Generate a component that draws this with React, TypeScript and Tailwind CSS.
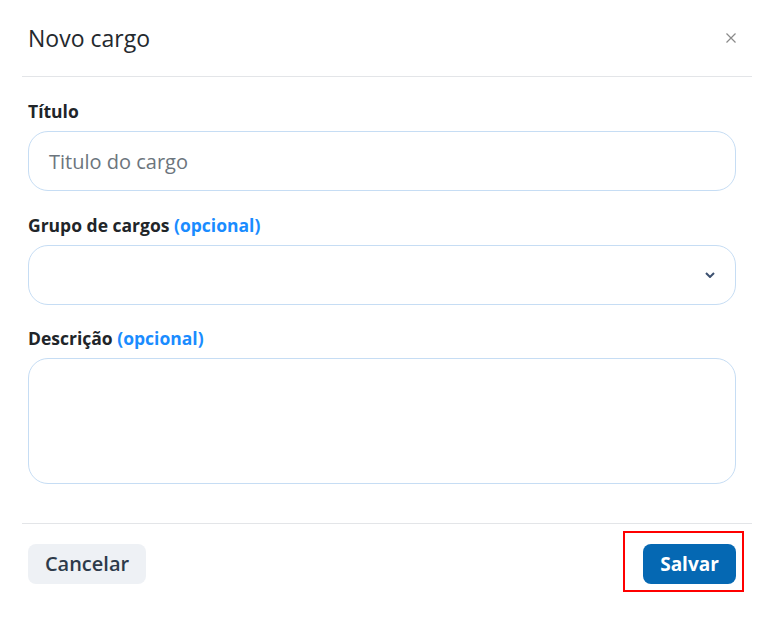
import React from "react";

export default function App() {
  return (
    <div className="w-[766px] h-[628px] bg-white font-['Open_Sans',sans-serif] text-[#212529]">
      <div className="ml-[22px] w-[730px]">
        <div className="h-[77px] border-b border-[#e3e5e8] flex items-center justify-between pl-[6px] pr-[16px]">
          <h2 className="text-[23px] leading-none font-normal text-[#24292e]">Novo cargo</h2>
          <button className="w-[10px] h-[10px] flex items-center justify-center -mt-[1px]">
            <svg width="10" height="10" viewBox="0 0 10 10">
              <path d="M0.5 0.5 L9.5 9.5 M9.5 0.5 L0.5 9.5" stroke="#8a8a8a" strokeWidth="1.2" />
            </svg>
          </button>
        </div>
        <div className="pl-[6px] pr-[16px] pt-[22px] pb-[39px] border-b border-[#e3e5e8]">
          <label className="block text-[17.5px] leading-[24px] font-bold text-[#212529]">Título</label>
          <div className="mt-[8px] h-[60px] rounded-[20px] border border-[#c6ddf4] flex items-center pl-[20px]">
            <span className="text-[20px] text-[#6c757d] mt-[1px]">Titulo do cargo</span>
          </div>
          <label className="block mt-[22px] text-[17.5px] leading-[24px] font-bold text-[#212529]">
            Grupo de cargos <span className="text-[#1a8cff]">(opcional)</span>
          </label>
          <div className="mt-[8px] h-[60px] rounded-[20px] border border-[#c6ddf4] flex items-center justify-end pr-[20px]">
            <svg width="10" height="6" viewBox="0 0 10 6">
              <path d="M1 1 L5 5 L9 1" stroke="#3d5170" strokeWidth="2" fill="none" />
            </svg>
          </div>
          <label className="block mt-[21px] text-[17.5px] leading-[24px] font-bold text-[#212529]">
            Descrição <span className="text-[#1a8cff]">(opcional)</span>
          </label>
          <div className="mt-[8px] h-[126px] rounded-[20px] border border-[#c6ddf4]"></div>
        </div>
        <div className="pl-[6px] pr-[16px] pt-[20px] flex items-center justify-between">
          <button className="w-[118px] h-[40px] rounded-[8px] bg-[#eef1f5] text-[20px] font-semibold text-[#2d3a4a]">
            Cancelar
          </button>
          <div className="relative">
            <div className="absolute left-[-20px] top-[-13px] w-[121px] h-[61px] border-[2px] border-[#ff0000]"></div>
            <button className="relative w-[93px] h-[40px] rounded-[8px] bg-[#0568b3] text-[19px] font-bold text-white">
              Salvar
            </button>
          </div>
        </div>
      </div>
    </div>
  );
}
